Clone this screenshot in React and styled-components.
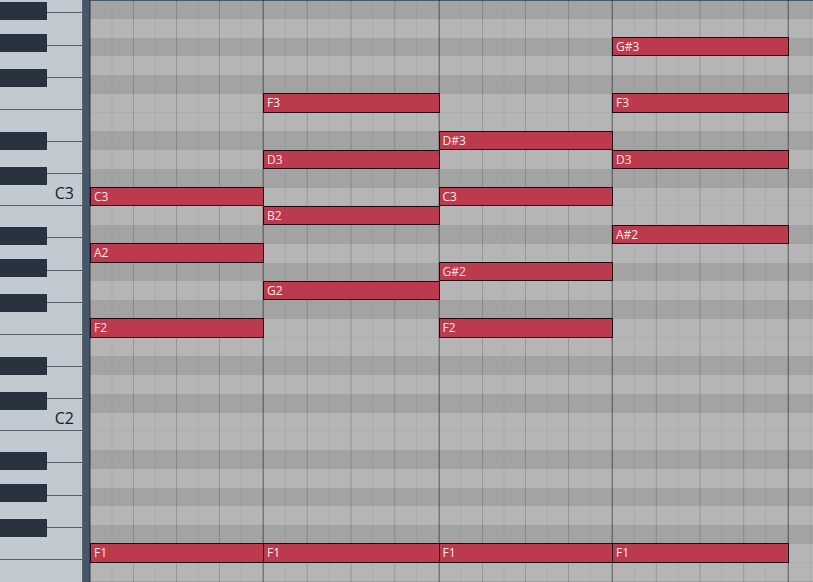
import React from 'react';
import styled, { createGlobalStyle } from 'styled-components';

const ROW_H = 18.75;
const WHITE_H = (ROW_H * 12) / 7;
const BAR_WIDTHS = [173, 175.5, 173.5, 176, 176];

const PITCHES = ['A#3', 'A3', 'G#3', 'G3', 'F#3', 'F3', 'E3', 'D#3', 'D3', 'C#3', 'C3',
  'B2', 'A#2', 'A2', 'G#2', 'G2', 'F#2', 'F2', 'E2', 'D#2', 'D2', 'C#2', 'C2',
  'B1', 'A#1', 'A1', 'G#1', 'G1', 'F#1', 'F1', 'E1', 'D#1'];

const WHITE_KEYS = ['B3', 'A3', 'G3', 'F3', 'E3', 'D3', 'C3', 'B2', 'A2', 'G2', 'F2',
  'E2', 'D2', 'C2', 'B1', 'A1', 'G1', 'F1', 'E1'];

// centre of each black key, measured up from the bottom of the octave's C key
const BLACK_OFFSETS = [30, 65.2, 128, 163, 195.2];
const OCTAVE_BOTTOMS = [206.25, 431.25, 656.25];

const NOTES = [
  { bar: 0, pitch: 'C3' }, { bar: 0, pitch: 'A2' }, { bar: 0, pitch: 'F2' }, { bar: 0, pitch: 'F1' },
  { bar: 1, pitch: 'F3' }, { bar: 1, pitch: 'D3' }, { bar: 1, pitch: 'B2' }, { bar: 1, pitch: 'G2' }, { bar: 1, pitch: 'F1' },
  { bar: 2, pitch: 'D#3' }, { bar: 2, pitch: 'C3' }, { bar: 2, pitch: 'G#2' }, { bar: 2, pitch: 'F2' }, { bar: 2, pitch: 'F1' },
  { bar: 3, pitch: 'G#3' }, { bar: 3, pitch: 'F3' }, { bar: 3, pitch: 'D3' }, { bar: 3, pitch: 'A#2' }, { bar: 3, pitch: 'F1' },
];

const barStart = (i) => BAR_WIDTHS.slice(0, i).reduce((a, b) => a + b, 0);

const GlobalStyle = createGlobalStyle`
  html, body {
    margin: 0;
    padding: 0;
    background: #b5b5b5;
    overflow: hidden;
  }
`;

const Frame = styled.div`
  display: flex;
  width: 813px;
  height: 582px;
  overflow: hidden;
`;

const Keyboard = styled.div`
  position: relative;
  width: 82px;
  height: 100%;
  overflow: hidden;
  background: #c1c9d1;
  border-right: 1px solid #5b6570;
`;

const WhiteColumn = styled.div`
  display: flex;
  flex-direction: column;
  margin-top: -${ROW_H}px;
`;

const WhiteKey = styled.div`
  box-sizing: border-box;
  flex: 0 0 ${WHITE_H}px;
  display: flex;
  align-items: flex-end;
  justify-content: flex-end;
  padding: 0 8px 2px 0;
  background: #c1c9d1;
  border-bottom: 1px solid #55606c;
  font-family: 'Open Sans', 'Noto Sans', sans-serif;
  font-size: 16px;
  line-height: 20px;
  color: #1c1c1c;
`;

const BlackKey = styled.div`
  position: absolute;
  left: 0;
  width: 47px;
  height: 18px;
  background: #28333f;
`;

const Strip = styled.div`
  width: 6px;
  height: 100%;
  background: #46576c;
  border-right: 1px solid #34424f;
`;

const Roll = styled.div`
  position: relative;
  flex: 1;
  height: 100%;
  overflow: hidden;
`;

const Rows = styled.div`
  display: flex;
  flex-direction: column;
`;

const Row = styled.div`
  box-sizing: border-box;
  flex: 0 0 ${ROW_H}px;
  background: ${(p) => (p.$black ? '#a3a3a3' : '#b5b5b5')};
  border-bottom: ${(p) => (p.$split ? '1px solid #adadad' : 'none')};
`;

const BarLayer = styled.div`
  position: absolute;
  inset: 0;
  display: flex;
  box-shadow: inset 0 1px #4a5a6e;
  pointer-events: none;
`;

const Bar = styled.div`
  box-sizing: border-box;
  flex: 0 0 ${(p) => p.$w}px;
  height: 100%;
  border-left: 1.5px solid rgba(0, 0, 0, 0.2);
  background-image:
    linear-gradient(to right, rgba(0, 0, 0, 0.12) 0 1px, transparent 1px),
    linear-gradient(to right, rgba(0, 0, 0, 0.055) 0 1px, transparent 1px);
  background-size: 25% 100%, 12.5% 100%;
  background-position: -1px 0, -1px 0;
  background-repeat: repeat-x;
`;

const Note = styled.div`
  position: absolute;
  box-sizing: border-box;
  height: ${ROW_H + 0.5}px;
  display: flex;
  align-items: center;
  padding-left: 3px;
  background: #bc3a4e;
  border: 1px solid #1d0c10;
  font-family: 'Open Sans', 'Noto Sans', sans-serif;
  font-size: 12px;
  color: #f6e8ea;
  white-space: nowrap;
`;

const App = () => (
  <Frame>
    <GlobalStyle />
    <Keyboard>
      <WhiteColumn>
        {WHITE_KEYS.map((k) => (
          <WhiteKey key={k}>{k.startsWith('C') ? k : ''}</WhiteKey>
        ))}
      </WhiteColumn>
      {OCTAVE_BOTTOMS.flatMap((bottom, o) =>
        BLACK_OFFSETS.map((off, i) => (
          <BlackKey key={`${o}-${i}`} style={{ top: bottom - off - 9 }} />
        )))}
    </Keyboard>
    <Strip />
    <Roll>
      <Rows>
        {PITCHES.map((p) => (
          <Row key={p} $black={p.includes('#')} $split={/^[FC]\d/.test(p)} />
        ))}
      </Rows>
      <BarLayer>
        {BAR_WIDTHS.map((w, i) => (
          <Bar key={i} $w={w} />
        ))}
      </BarLayer>
      {NOTES.map((n) => (
        <Note
          key={`${n.bar}-${n.pitch}`}
          style={{
            top: PITCHES.indexOf(n.pitch) * ROW_H - 0.5,
            left: barStart(n.bar),
            width: BAR_WIDTHS[n.bar] + 1,
          }}
        >
          {n.pitch}
        </Note>
      ))}
    </Roll>
  </Frame>
);

export default App;
